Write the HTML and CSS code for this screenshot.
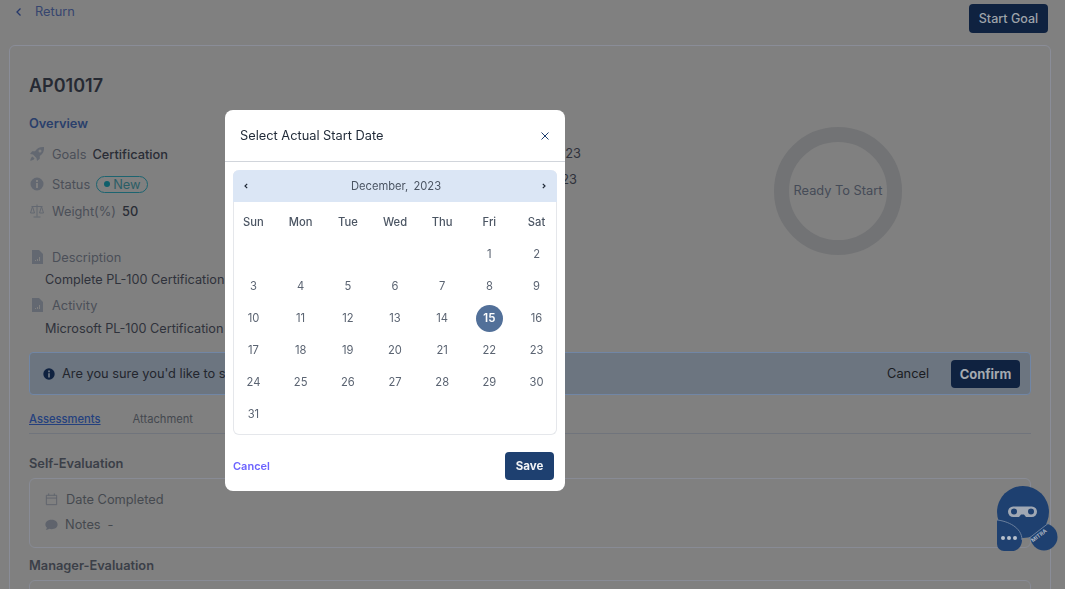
FILE: index.html
```html
<!DOCTYPE html>
<html lang="en">
<head>
<meta charset="utf-8">
<title>Goal AP01017</title>
<link rel="stylesheet" href="styles.css">
</head>
<body>
<div class="page">
  <header class="topbar">
    <a class="back"><svg class="back-icon" viewBox="0 0 10 10"><path d="M6.500 1.500 3 5l3.500 3.500"/></svg>Return</a>
    <button class="start-btn">Start Goal</button>
  </header>
  <main class="card">
    <h1 class="code">AP01017</h1>
    <div class="top-grid">
      <section class="overview">
        <h2 class="overview-title">Overview</h2>
        <div class="meta goals">
          <svg class="ico" viewBox="0 0 16 16"><path d="M15 1c-4-.4-7 1.200-9 4.200H3.200L1 8l3 .5L7.500 12l.5 3 2.800-2.200V10C14 8 15.400 5 15 1zM11 6.500a1.500 1.500 0 1 1 0-3 1.500 1.500 0 0 1 0 3zM3.500 10.500C2 11 1.500 13 1.200 14.800 3 14.500 5 14 5.500 12.500z"/></svg>
          <span class="label">Goals</span><span class="value">Certification</span>
        </div>
        <div class="meta status">
          <svg class="ico" viewBox="0 0 16 16"><path fill-rule="evenodd" d="M8 1.500a6.500 6.500 0 1 0 0 13 6.500 6.500 0 0 0 0-13zM7 4h2v2H7zm0 3h2v5H7z"/></svg>
          <span class="label">Status</span><span class="pill"><i class="pill-dot"></i>New</span>
        </div>
        <div class="meta weight">
          <svg class="ico ico-line" viewBox="0 0 16 16"><path d="M8 1.500v12M4.500 14h7M2.500 3.500h11M3.500 3.500 1.500 10h4zM12.500 3.500l-2 6.500h4z"/></svg>
          <span class="label">Weight(%)</span><span class="value">50</span>
        </div>
        <div class="meta desc">
          <svg class="ico" viewBox="0 0 16 16"><path fill-rule="evenodd" d="M3 1h7l4 4v10H3zM8 12h1v-2H8zm2 0h1V8h-1zm-4 0h1v-1H6z"/></svg>
          <span class="label">Description</span>
        </div>
        <p class="para">Complete PL-100 Certification</p>
        <div class="meta activity">
          <svg class="ico" viewBox="0 0 16 16"><path fill-rule="evenodd" d="M3 1h7l4 4v10H3zM8 12h1v-2H8zm2 0h1V8h-1zm-4 0h1v-1H6z"/></svg>
          <span class="label">Activity</span>
        </div>
        <p class="para para-last">Microsoft PL-100 Certification</p>
      </section>
      <section class="dates">
        <div class="date-a">12/15/2023</div>
        <div class="date-b">12/31/2023</div>
      </section>
      <section class="progress">
        <div class="ring">Ready To Start</div>
      </section>
    </div>
    <div class="banner">
      <svg class="banner-ico" viewBox="0 0 16 16"><path fill-rule="evenodd" d="M8 1.500a6.500 6.500 0 1 0 0 13 6.500 6.500 0 0 0 0-13zM7 4h2v2H7zm0 3h2v5H7z"/></svg>
      <span class="banner-text">Are you sure you'd like to start this goal?</span>
      <span class="banner-cancel">Cancel</span>
      <button class="confirm">Confirm</button>
    </div>
    <nav class="tabs">
      <a class="tab tab-active">Assessments</a>
      <a class="tab">Attachment</a>
    </nav>
    <h3 class="eval-title">Self-Evaluation</h3>
    <div class="eval-box">
      <div class="eval-row">
        <svg class="eval-ico eval-cal ico-line" viewBox="0 0 16 16"><path d="M2.500 3.500h11v10h-11zM2.500 6.500h11M5 1.500v2M11 1.500v2"/></svg>
        <span>Date Completed</span>
      </div>
      <div class="eval-row eval-notes">
        <svg class="eval-ico" viewBox="0 0 16 16"><path d="M8 3C4.400 3 1.500 5 1.500 8c0 1.400.6 2.500 1.600 3.400-.2 1-.7 1.800-1.300 2.300 1.500 0 2.800-.5 3.700-1.200.8.300 1.600.5 2.500.5 3.600 0 6.500-2 6.500-5S11.600 3 8 3z"/></svg>
        <span>Notes</span><span class="dash">-</span>
      </div>
    </div>
    <h3 class="eval-title mgr">Manager-Evaluation</h3>
    <div class="eval-box"></div>
  </main>
</div>

<div class="modal">
  <div class="modal-head">
    <span class="modal-title">Select Actual Start Date</span>
    <svg class="close" viewBox="0 0 10 10"><path d="M1.500 1.500l7 7M8.500 1.500l-7 7"/></svg>
  </div>
  <div class="calendar">
    <div class="cal-head">
      <svg class="nav" viewBox="0 0 8 8"><path d="M5.200 1.800 3 4l2.200 2.200"/></svg>
      <span class="cal-month">December, 2023</span>
      <svg class="nav" viewBox="0 0 8 8"><path d="M2.800 1.800 5 4 2.800 6.200"/></svg>
    </div>
    <div class="cal-grid">
      <span class="dow">Sun</span><span class="dow">Mon</span><span class="dow">Tue</span><span class="dow">Wed</span><span class="dow">Thu</span><span class="dow">Fri</span><span class="dow">Sat</span>
      <span></span><span></span><span></span><span></span><span></span><span class="day">1</span><span class="day">2</span>
      <span class="day">3</span><span class="day">4</span><span class="day">5</span><span class="day">6</span><span class="day">7</span><span class="day">8</span><span class="day">9</span>
      <span class="day">10</span><span class="day">11</span><span class="day">12</span><span class="day">13</span><span class="day">14</span><span class="day"><b class="selected">15</b></span><span class="day">16</span>
      <span class="day">17</span><span class="day">18</span><span class="day">19</span><span class="day">20</span><span class="day">21</span><span class="day">22</span><span class="day">23</span>
      <span class="day">24</span><span class="day">25</span><span class="day">26</span><span class="day">27</span><span class="day">28</span><span class="day">29</span><span class="day">30</span>
      <span class="day">31</span>
    </div>
  </div>
  <div class="modal-foot">
    <a class="modal-cancel">Cancel</a>
    <button class="save">Save</button>
  </div>
</div>

<svg class="bot" viewBox="0 0 62 66">
  <circle class="bot-fill" cx="48" cy="52" r="13.500"/>
  <circle class="bot-fill" cx="27" cy="27" r="26"/>
  <path class="bot-fill" d="M1 27v32a7 7 0 0 0 7 7h8c6 0 10-5 10-11 0-13-15-19-25-20z"/>
  <path class="bot-line" d="M1 35c10 1 25 7 25 20"/>
  <path class="bot-line" d="M32 54 54 37"/>
  <rect class="bot-visor" x="12" y="21.500" width="29" height="10.500" rx="5.200"/>
  <path class="bot-fill" d="M23 32l2-2.500h3l2 2.500z"/>
  <circle class="bot-fill" cx="18" cy="26.500" r="3"/>
  <circle class="bot-fill" cx="35" cy="26.500" r="3"/>
  <circle class="bot-dot" cx="7" cy="53" r="2"/>
  <circle class="bot-dot" cx="13" cy="53" r="2"/>
  <circle class="bot-dot" cx="19" cy="53" r="2"/>
  <text class="bot-text" transform="translate(37 57.500) rotate(-38)">MITRA</text>
</svg>
</body>
</html>
```

FILE: styles.css
```css
* { box-sizing: border-box; }
html, body { margin: 0; height: 589px; overflow: hidden; }
body {
  background: #808080;
  font-family: Inter, "Liberation Sans", sans-serif;
  font-size: 12.800px;
  color: #4b4f58;
}
h1, h2, h3, p { margin: 0; font: inherit; }

.page { padding: 4px 17px 0 9px; }
.topbar { display: flex; justify-content: space-between; align-items: flex-start; height: 41px; }
.back { display: flex; align-items: center; gap: 11px; padding: 0 0 0 5px; height: 15px; color: #36456f; line-height: 15px; }
.back-icon { width: 10px; height: 10px; fill: none; stroke: #25386b; stroke-width: 1.300; }
.start-btn {
  width: 79px; height: 29px; border: 0; border-radius: 4px; padding: 0;
  background: #0f2240; color: #9ea3aa; font: 500 12.500px Inter, sans-serif;
}

.card {
  width: 1042px; height: 600px;
  border: 1px solid #8a8d98; border-radius: 6px;
  padding: 29px 19px 0 19px;
}
.code { font-size: 18px; font-weight: 600; line-height: 22px; color: #262a33; }
.top-grid { display: grid; grid-template-columns: 452px 100px 1fr; height: 255px; }

.overview { padding-top: 19px; }
.overview-title { font-weight: 600; line-height: 16px; color: #2a3f6b; }
.meta { display: flex; align-items: center; height: 18px; }
.goals { margin-top: 13px; }
.status { margin-top: 12px; }
.weight { margin-top: 9px; }
.desc { margin-top: 28px; }
.activity { margin-top: 7px; }
.ico { width: 16px; height: 16px; margin-right: 7px; fill: #636871; flex: none; }
.ico-line { fill: none; stroke: #636871; stroke-width: 1; }
.label { color: #4b4f58; margin-right: 6px; }
.value { color: #2a2d36; font-weight: 500; }
.pill {
  display: inline-flex; align-items: center; height: 17px; padding: 0 6px 0 7px;
  border: 1px solid #1c6470; border-radius: 9px; color: #2b5e66; line-height: 15px;
}
.pill-dot { width: 6px; height: 6px; border-radius: 50%; background: #0f5f6b; margin-right: 3px; }
.para { padding-left: 16px; margin-top: 5px; line-height: 18px; color: #2f323b; font-size: 12.700px; }
.para-last { margin-top: 6px; }

.dates { padding-top: 22px; text-align: right; color: #2f323b; line-height: 18px; }
.date-a { margin-top: 26px; }
.date-b { margin-top: 8px; padding-right: 4px; }

.progress { padding: 30px 0 0 193px; }
.ring {
  width: 128px; height: 128px; border-radius: 50%;
  border: 15px solid #727375; padding-bottom: 2px;
  display: flex; align-items: center; justify-content: center;
  white-space: nowrap; color: #454b57;
}

.banner {
  display: flex; align-items: center;
  width: 1002px; height: 43px;
  background: #6c7580; border: 1px solid #7186a5; border-radius: 4px;
  padding: 0 10px 0 12px;
}
.banner-ico { width: 14px; height: 14px; fill: #0f2240; margin-right: 6px; }
.banner-text { color: #23262e; flex: 1; }
.banner-cancel { color: #1a1c22; margin-right: 22px; }
.confirm {
  width: 69px; height: 28px; border: 0; border-radius: 4px; padding: 0;
  background: #0f2240; color: #a4a9b0; font: 700 13px Inter, sans-serif;
}

.tabs { display: flex; gap: 32px; height: 39px; padding-top: 17px; border-bottom: 1px solid #70747c; font-size: 11.200px; line-height: 14px; width: 1002px; }
.tab { color: #44484f; }
.tab-active { color: #24407e; text-decoration: underline; font-weight: 500; }

.eval-title { margin-top: 21px; font-weight: 600; line-height: 17px; color: #3b3f48; }
.mgr { margin-top: 9px; }
.eval-box {
  width: 1002px; height: 70px; margin-top: 6px;
  border: 1px solid #888b95; border-radius: 6px;
  padding: 12px 14px;
}
.eval-row { display: flex; align-items: center; height: 17px; color: #45494f; }
.eval-notes { margin-top: 8px; }
.eval-ico { width: 15px; height: 15px; margin-right: 6px; fill: #5f636c; }
.eval-cal { margin-right: 7px; }
.eval-ico.ico-line { fill: none; stroke: #5f636c; }
.dash { margin-left: 7px; }

.modal {
  position: absolute; left: 225px; top: 110px;
  width: 340px; height: 381px;
  background: #fff; border-radius: 8px;
  padding: 0 8px;
  color: #374151;
  will-change: transform;
}
.modal-head {
  display: flex; justify-content: space-between; align-items: center;
  height: 52px; margin: 0 -8px; padding: 0 15px;
  border-bottom: 1px solid #d1d5db;
}
.modal-title { color: #1f2937; }
.close { width: 10px; height: 10px; fill: none; stroke: #1e3f70; stroke-width: 1; }
.calendar {
  margin-top: 8px; height: 265px;
  border: 1px solid #e5e7eb; border-top: 0; border-radius: 6px;
}
.cal-head {
  display: flex; justify-content: space-between; align-items: center;
  height: 32px; margin: 0 -1px; padding: 0 9px;
  background: #dbe6f5; border-radius: 6px 6px 0 0;
  font-size: 11.200px; color: #4b5563;
}
.cal-month { word-spacing: 2px; margin-left: 2px; }
.nav { width: 8px; height: 8px; fill: none; stroke: #1f2937; stroke-width: 1.200; }
.cal-grid {
  display: grid; grid-template-columns: repeat(7, 47.200px); grid-auto-rows: 32px;
  justify-content: center; align-items: center; justify-items: center;
  padding-top: 4px;
}
.dow { font-size: 11.200px; font-weight: 500; color: #4b5563; }
.day { font-size: 11.200px; color: #5b6472; display: flex; align-items: center; justify-content: center; width: 27px; height: 27px; }
.selected {
  display: flex; align-items: center; justify-content: center;
  width: 27px; height: 27px; border-radius: 50%;
  background: #527099; color: #fff; font-weight: 600; font-size: 11.500px;
}
.modal-foot { display: flex; justify-content: space-between; align-items: center; margin-top: 17px; padding-right: 3px; }
.modal-cancel { font-size: 11px; font-weight: 600; color: #6c63ff; }
.save {
  width: 49px; height: 28px; border: 0; border-radius: 4px; padding: 0;
  background: #1e4070; color: #f3f4f6; font: 700 11.500px Inter, sans-serif;
}

.bot { position: absolute; left: 996px; top: 485px; width: 62px; height: 66px; }
.bot-fill { fill: #1e4070; }
.bot-line { fill: none; stroke: #6b7f9c; stroke-width: 1; }
.bot-visor { fill: #a0a8b4; }
.bot-dot { fill: #b7c0cd; }
.bot-text { fill: #aab4c2; font-family: Inter, sans-serif; font-size: 5.500px; font-weight: 700; }
```
